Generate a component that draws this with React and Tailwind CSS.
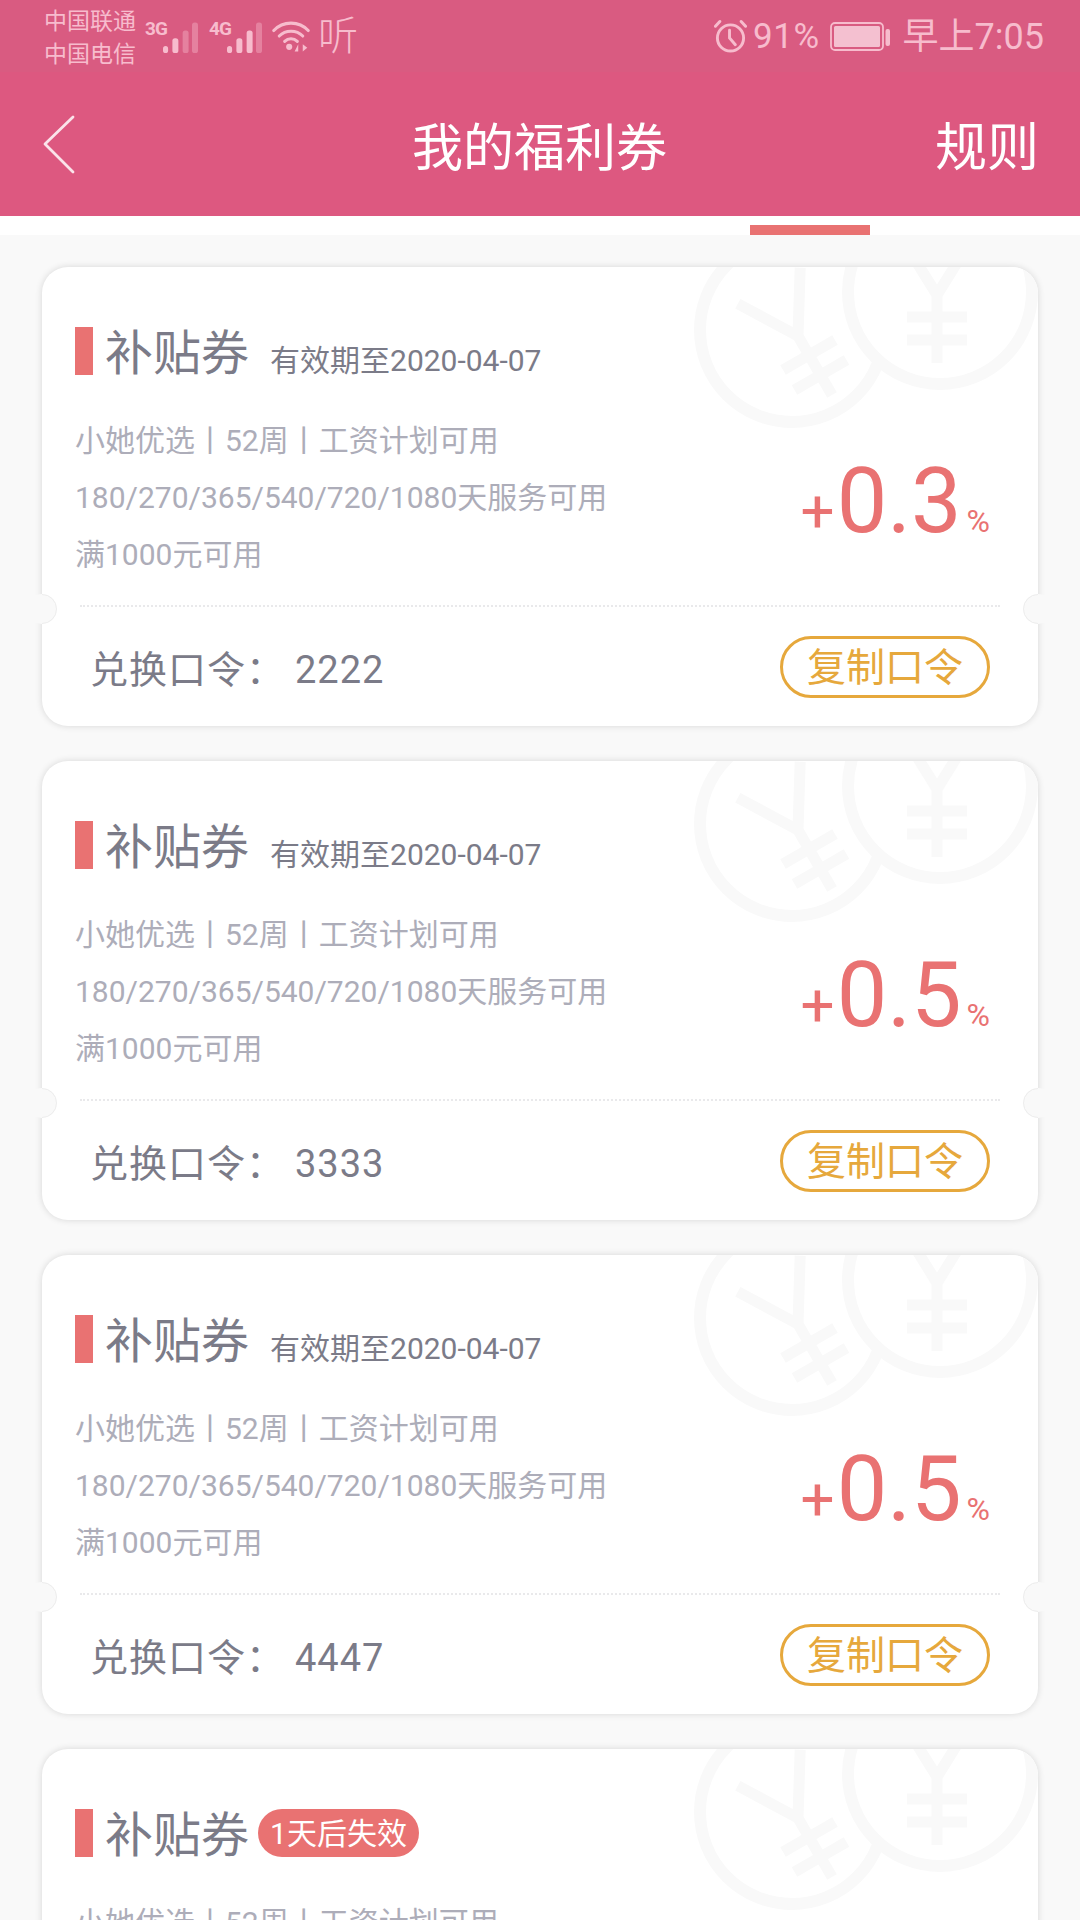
import React from "react";

const FONT = "font-['Roboto','Noto_Sans_CJK_SC',sans-serif]";

function Coins() {
  const yen = (
    <g fill="none" stroke="#f9f9f9" strokeWidth="11">
      <path d="M-36 -58 L0 0 L36 -58 M0 0 V68 M-30 22 H30 M-30 45 H30" />
    </g>
  );
  return (
    <div className="absolute inset-0 overflow-hidden rounded-[26px]">
      <svg className="absolute left-0 top-0" width="996" height="459" viewBox="0 0 996 459">
        <circle cx="750" cy="63" r="92" fill="none" stroke="#f9f9f9" strokeWidth="12" />
        <g transform="translate(756 69) rotate(-30)">{yen}</g>
        <circle cx="898" cy="25" r="92" fill="#fff" stroke="#f9f9f9" strokeWidth="12" />
        <g transform="translate(895 28)">{yen}</g>
      </svg>
    </div>
  );
}

function Notch({ side }) {
  const left = side === "left";
  return (
    <div className={"absolute top-[327px] h-[30px] w-[30px] " + (left ? "left-[-15px]" : "right-[-15px]")}>
      <div className="absolute inset-0 rounded-full bg-[#f9f9f9]" />
      <div
        className={
          "absolute inset-0 rounded-full border border-[#ededed] " +
          (left ? "[clip-path:inset(0_0_0_50%)]" : "[clip-path:inset(0_50%_0_0)]")
        }
      />
    </div>
  );
}

function Card({ value, code, badge }) {
  return (
    <div className="relative h-[459px] w-[996px] shrink-0 rounded-[26px] bg-white shadow-[0_0_7px_rgba(0,0,0,0.14)]">
      <Coins />
      <Notch side="left" />
      <Notch side="right" />
      <div className="relative flex h-[338px] justify-between pl-[33px] pr-[48px] pt-[60px]">
        <div>
          <div className="flex h-[48px] items-center">
            <div className="h-[48px] w-[18px] bg-[#e97272]" />
            <div className="ml-[12px] mt-[6px] text-[48px] leading-[48px] text-[#7b7b88]">补贴券</div>
            {badge ? (
              <div className="ml-[9px] flex h-[48px] items-center rounded-full bg-[#e97272] px-[12px] text-[30px] text-white">
                {badge}
              </div>
            ) : (
              <div className="ml-[21px] mt-[19px] text-[30px] text-[#7b7b88]">有效期至2020-04-07</div>
            )}
          </div>
          <div className="mt-[37px] text-[30px] leading-[57px] text-[#adadb9]">
            <div>小她优选丨52周丨工资计划可用</div>
            <div>180/270/365/540/720/1080天服务可用</div>
            <div>满1000元可用</div>
          </div>
        </div>
        <div className="mt-[135px] flex h-[80px] items-baseline text-[#e97272]">
          <span className="text-[60px] leading-[80px]">+</span>
          <span className="ml-[2px] text-[90px] leading-[80px]">{value}</span>
          <span className="ml-[5px] text-[32px] leading-[80px]">%</span>
        </div>
      </div>
      <div className="relative mx-[38px] border-t-[2px] border-dotted border-[#e9e9eb]" />
      <div className="relative flex h-[119px] items-center justify-between pl-[48px] pr-[48px]">
        <div className="mt-[8px] flex items-center text-[38px] tracking-[1px] text-[#7b7b88]">
          <span className="w-[205px]">兑换口令：</span>
          <span>{code}</span>
        </div>
        <div className="flex h-[62px] w-[210px] items-center justify-center rounded-full border-[3px] border-[#e6a83c] pt-[3px] text-[39px] text-[#e6a83c]">
          复制口令
        </div>
      </div>
    </div>
  );
}

function Signal({ faint }) {
  const bars = [
    [0, 30, 6, 8],
    [11, 21, 7, 17],
    [23, 12, 7, 26],
    [34, 3, 7, 35],
  ];
  return (
    <svg width="35" height="33" viewBox="0 0 41 38" preserveAspectRatio="none">
      {bars.map((b, i) => (
        <rect
          key={i}
          x={b[0]}
          y={b[1]}
          width={b[2]}
          height={b[3]}
          rx="3"
          fill="#f7bccd"
          opacity={i >= faint ? 0.4 : 1}
        />
      ))}
    </svg>
  );
}

function Net({ label, faint }) {
  return (
    <div className="flex h-[33px] w-[53px] items-start">
      <span className="w-[18px] text-[19px] font-bold leading-[18px] tracking-[-1px]">{label}</span>
      <Signal faint={faint} />
    </div>
  );
}

export default function App() {
  return (
    <div className={"h-[1920px] w-[1080px] overflow-hidden bg-[#f9f9f9] " + FONT}>
      <div className="flex h-[72px] items-center justify-between bg-[#d95b81] pl-[44px] pr-[36px] text-[#f7bccd]">
        <div className="flex items-center">
          <div className="mt-[4px] w-[94px] text-[23px] leading-[33px]">
            <div>中国联通</div>
            <div>中国电信</div>
          </div>
          <div className="ml-[7px]"><Net label="3G" faint={2} /></div>
          <div className="ml-[11px]"><Net label="4G" faint={3} /></div>
          <svg className="ml-[10px]" width="38" height="34" viewBox="0 0 42 36">
            <g fill="none" stroke="#f7bccd" strokeWidth="3.400" strokeLinecap="round">
              <path d="M2 12 C12 1 30 1 40 12" />
              <path d="M8 18 C15 11 27 11 34 18" />
              <path d="M14 24 C18 20 24 20 28 24" />
            </g>
            <circle cx="19" cy="30" r="3.400" fill="#f7bccd" />
            <path d="M29 35 L29 27 L25 35 Z M34 27 L34 35 L39 31 Z" fill="#f7bccd" />
          </svg>
          <span className="ml-[8px] mt-[2px] text-[40px] font-light leading-[40px]">听</span>
        </div>
        <div className="flex items-center">
          <svg width="33" height="36" viewBox="0 0 34 36">
            <g fill="none" stroke="#f7bccd" strokeWidth="3" strokeLinecap="round">
              <circle cx="17" cy="20" r="13.500" />
              <path d="M16 12 V20 L22 27" />
              <path d="M1.500 8 L6 3 M32.500 8 L28 3" />
            </g>
          </svg>
          <span className="ml-[6px] mt-[2px] text-[35px] tracking-[0.5px] leading-[40px]">91%</span>
          <svg className="ml-[10px]" width="60" height="32" viewBox="0 0 60 32">
            <rect x="1" y="3" width="52" height="27" rx="4" fill="none" stroke="#f7bccd" strokeWidth="1.800" />
            <rect x="4" y="6" width="46" height="21" rx="1.500" fill="#f4c0d0" />
            <rect x="55.500" y="9" width="4.500" height="17" rx="2" fill="#f7bccd" />
          </svg>
          <span className="ml-[13px] mt-[2px] text-[36px] leading-[40px]">早上7:05</span>
        </div>
      </div>

      <div className="flex h-[144px] items-center bg-[#dd5880] pl-[43px] pr-[41px] text-white">
        <svg className="mt-[1px]" width="32" height="60" viewBox="0 0 32 60">
          <path d="M30 2 L2 29 L30 57" fill="none" stroke="#fbe3ea" strokeWidth="2.800" strokeLinecap="round" strokeLinejoin="round" />
        </svg>
        <div className="ml-[337px] mt-[9px] text-[51px] leading-[60px]">我的福利券</div>
        <div className="ml-auto mt-[9px] text-[52px] leading-[60px]">规则</div>
      </div>

      <div className="flex h-[19px] items-end bg-white pl-[750px]">
        <div className="h-[10px] w-[120px] bg-[#e97272]" />
      </div>

      <div className="flex flex-col gap-[35px] pl-[42px] pt-[32px]">
        <Card value="0.3" code="2222" />
        <Card value="0.5" code="3333" />
        <Card value="0.5" code="4447" />
        <Card value="0.5" code="5555" badge="1天后失效" />
      </div>
    </div>
  );
}
